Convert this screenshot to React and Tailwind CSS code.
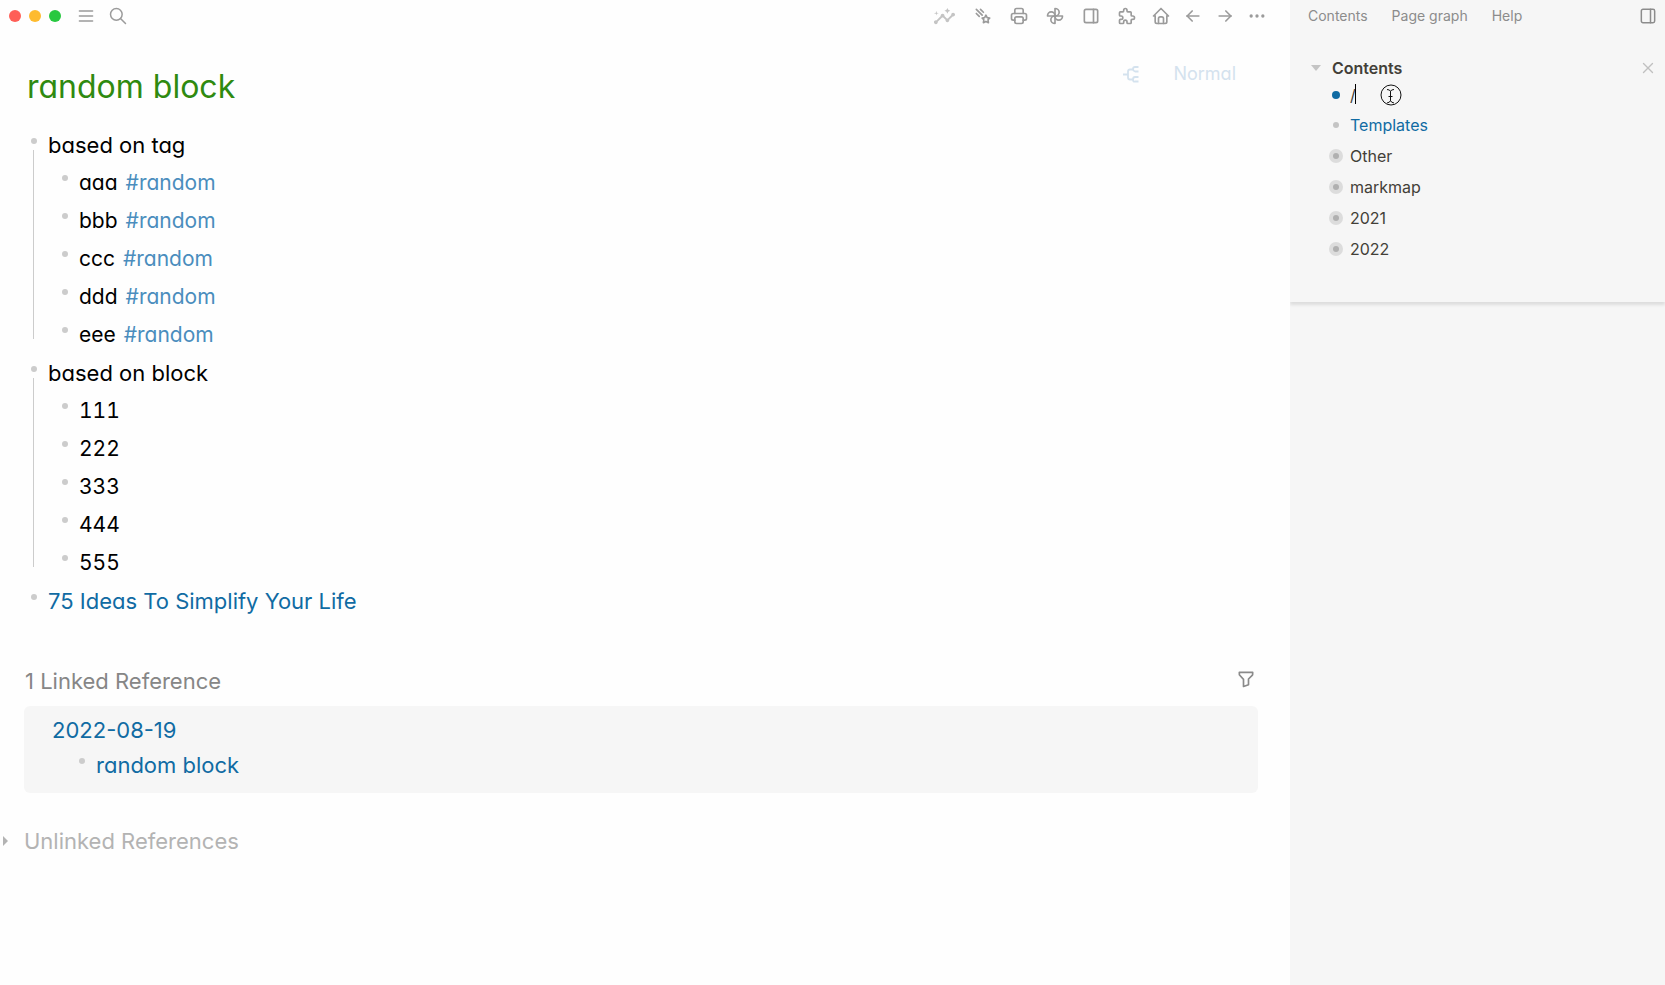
import React from "react";
import {
  TbArrowLeft,
  TbArrowRight,
  TbComet,
  TbDots,
  TbFilter,
  TbHome,
  TbLayoutSidebarRight,
  TbMenu2,
  TbPrinter,
  TbPuzzle,
  TbSearch,
  TbWindmill,
  TbX,
} from "react-icons/tb";
import { MdInsights } from "react-icons/md";

const HAND = "font-['Inter',sans-serif] [font-feature-settings:'cv11']";

const toolbar = [
  { label: "Comet", Icon: TbComet, box: "w-9" },
  { label: "Print", Icon: TbPrinter, box: "w-9" },
  { label: "Windmill", Icon: TbWindmill, box: "w-9" },
  { label: "Layout", Icon: TbLayoutSidebarRight, box: "w-9" },
  { label: "Plugins", Icon: TbPuzzle, box: "w-9" },
  { label: "Home", Icon: TbHome, box: "w-8" },
  { label: "Back", Icon: TbArrowLeft, box: "w-8" },
  { label: "Forward", Icon: TbArrowRight, box: "w-8" },
  { label: "More", Icon: TbDots, box: "w-8" },
];

const blocks = [
  { text: "based on tag", tag: "#random", children: ["aaa", "bbb", "ccc", "ddd", "eee"] },
  { text: "based on block", children: ["111", "222", "333", "444", "555"] },
];

const sideBlocks = ["Other", "markmap", "2021", "2022"];

/* An outline row: the gutter holds the bullet and, for a parent, the guide line beside its children. */
function Block({ children, nested, leading = "leading-[30px]" }) {
  return (
    <li className="flex gap-[11px]">
      <div className="flex w-1.5 shrink-0 flex-col pt-2">
        <span className="size-1.5 shrink-0 rounded-full bg-[#cccccc]" />
        {nested && <span className="mt-1.5 mb-[19px] ml-0.5 w-px flex-1 bg-[#cccccc]" />}
      </div>
      <div>
        <div className={`h-[38px] ${leading}`}>{children}</div>
        {nested}
      </div>
    </li>
  );
}

function Header() {
  return (
    <header className="flex h-8 items-center text-[#9b9b9b]">
      <div className="flex gap-2 pl-[9px]">
        <span className="size-3 rounded-full bg-[#ff5f57]" />
        <span className="size-3 rounded-full bg-[#febb2e]" />
        <span className="size-3 rounded-full bg-[#28c840]" />
      </div>
      <button aria-label="Menu" className="ml-4 flex w-[18px] justify-center">
        <TbMenu2 size={20} strokeWidth={1.6} className="shrink-0" />
      </button>
      <button aria-label="Search" className="ml-[14px] flex w-[18px] justify-center">
        <TbSearch size={20} strokeWidth={1.8} className="shrink-0" />
      </button>
      <nav className="ml-auto flex items-center pr-[17px]">
        <button aria-label="Insights" className="flex w-[42px] justify-center text-[#c4c4c4]">
          <MdInsights size={23} />
        </button>
        {toolbar.map(({ label, Icon, box }) => (
          <button key={label} aria-label={label} className={`flex justify-center ${box}`}>
            <Icon size={20} strokeWidth={2} />
          </button>
        ))}
      </nav>
    </header>
  );
}

function MindMapIcon() {
  return (
    <svg width="18" height="18" viewBox="0 0 18 18" fill="none" stroke="currentColor" strokeWidth="1.8">
      <path d="M0 9.500h5M15.500 2H12q-2 0-2 2t2 2.500h3.500M15.500 12H12q-2 0-2 2.500t2 2h3.500M10 4.500H7q-2 0-2 2v6q0 2 2 2h3" />
    </svg>
  );
}

function Page() {
  return (
    <div className={`flex-1 pr-8 pl-6 ${HAND}`}>
      <div className="flex items-start justify-between pt-8 pr-[22px]">
        <h1 className="pt-px pl-[3px] text-[32px] leading-[44px] text-[#2f8a10]">random block</h1>
        <div className="flex items-center gap-8 text-[#d4e2ee]">
          <button aria-label="Mind map">
            <MindMapIcon />
          </button>
          <button className="text-lg leading-5">Normal</button>
        </div>
      </div>

      <ul className="pt-[21px] pl-[7px] text-[22px] text-black">
        {blocks.map((block) => (
          <Block
            key={block.text}
            nested={
              <ul className="-mt-px mb-px pl-[14px] text-[21px] tabular-nums">
                {block.children.map((child) => (
                  <Block key={child} leading="leading-8">
                    {child}
                    {block.tag && (
                      <a href="#random" className="ml-2 text-[#4a8dbd]">
                        {block.tag}
                      </a>
                    )}
                  </Block>
                ))}
              </ul>
            }
          >
            {block.text}
          </Block>
        ))}
        <Block>
          <a href="#ideas" className="text-[#106ba3]">
            75 Ideas To Simplify Your Life
          </a>
        </Block>
      </ul>

      <section className="pt-9">
        <div className="flex items-start justify-between pr-0.5 pb-1">
          <h2 className="pl-px text-[22px] leading-[42px] text-[#868686]">1 Linked Reference</h2>
          <button aria-label="Filter" className="pt-[9px] text-[#8a8a8a]">
            <TbFilter size={20} strokeWidth={2} />
          </button>
        </div>
        <div className="rounded-md bg-[#f6f6f6] pt-2 pb-[5px] pl-7 text-[22px]">
          <a href="#date" className="block leading-8 text-[#106ba3]">
            2022-08-19
          </a>
          <ul className="pt-1 pl-[27px]">
            <Block>
              <a href="#random-block" className="text-[#106ba3]">
                random block
              </a>
            </Block>
          </ul>
        </div>
      </section>

      <button className="mt-8 -ml-[21px] flex items-center gap-4 text-[22px] leading-8 text-[#b3b3b3]">
        <svg width="5" height="10" viewBox="0 0 5 10" fill="currentColor">
          <path d="M0 0l5 5-5 5z" />
        </svg>
        Unlinked References
      </button>
    </div>
  );
}

function Sidebar() {
  return (
    <aside className="w-[375px] shrink-0 overflow-hidden bg-[#f6f6f6] font-['Inter',sans-serif] text-[#433f38]">
      <div className="flex h-8 items-center pr-[7px] pl-[18px] text-sm text-[#8c8c8c]">
        <nav className="flex gap-6">
          <button>Contents</button>
          <button>Page graph</button>
          <button>Help</button>
        </nav>
        <button aria-label="Toggle sidebar" className="ml-auto pb-px">
          <TbLayoutSidebarRight size={20} strokeWidth={1.8} />
        </button>
      </div>
      <section className="pt-6 pb-[38px] text-base shadow-[0_3px_3px_rgba(0,0,0,0.1)]">
        <div className="flex h-6 items-center pr-2 pl-[21px]">
          <svg width="10" height="6" viewBox="0 0 10 6" fill="#c4c4c4">
            <path d="M0 0h10L5 6z" />
          </svg>
          <h2 className="ml-[11px] font-semibold">Contents</h2>
          <button aria-label="Close" className="ml-auto text-[#c0c0c0]">
            <TbX size={18} strokeWidth={1.8} />
          </button>
        </div>
        <ul className="pl-[39px]">
          <li className="relative flex h-[29px] items-center gap-[7px]">
            <span className="flex w-[14px] justify-center">
              <span className="size-2 rounded-full bg-[#106ba3]" />
            </span>
            <input aria-label="Block" defaultValue="/" className="w-48 bg-transparent outline-none" />
            <span className="absolute top-1 left-[26px] h-5 w-px bg-black" />
            <svg
              className="absolute top-1 left-[51px]"
              width="22"
              height="22"
              viewBox="0 0 22 22"
              fill="none"
              stroke="#111"
            >
              <circle cx="11" cy="11" r="10" />
              <path d="M7 5.500q3 0 3.500 2v9q-.5 2-3.500 2.500M14 5.500q-3 0-3.500 2v9q.5 2 3.500 2.500M8.500 12.500h4" />
            </svg>
          </li>
          <li className="flex h-[31px] items-center gap-[7px]">
            <span className="flex w-[14px] justify-center">
              <span className="size-1.5 rounded-full bg-[#c4c4c4]" />
            </span>
            <a href="#templates" className="text-[#106ba3]">
              Templates
            </a>
          </li>
          {sideBlocks.map((text) => (
            <li key={text} className="flex h-[31px] items-center gap-[7px]">
              <span className="flex size-[14px] items-center justify-center rounded-full bg-[#dcdcdc]">
                <span className="size-1.5 rounded-full bg-[#b0b0b0]" />
              </span>
              {text}
            </li>
          ))}
        </ul>
      </section>
    </aside>
  );
}

export default function App() {
  return (
    <div className="flex min-h-screen bg-[#fefefe]">
      <main className="flex min-w-0 flex-1 flex-col">
        <Header />
        <Page />
      </main>
      <Sidebar />
    </div>
  );
}
